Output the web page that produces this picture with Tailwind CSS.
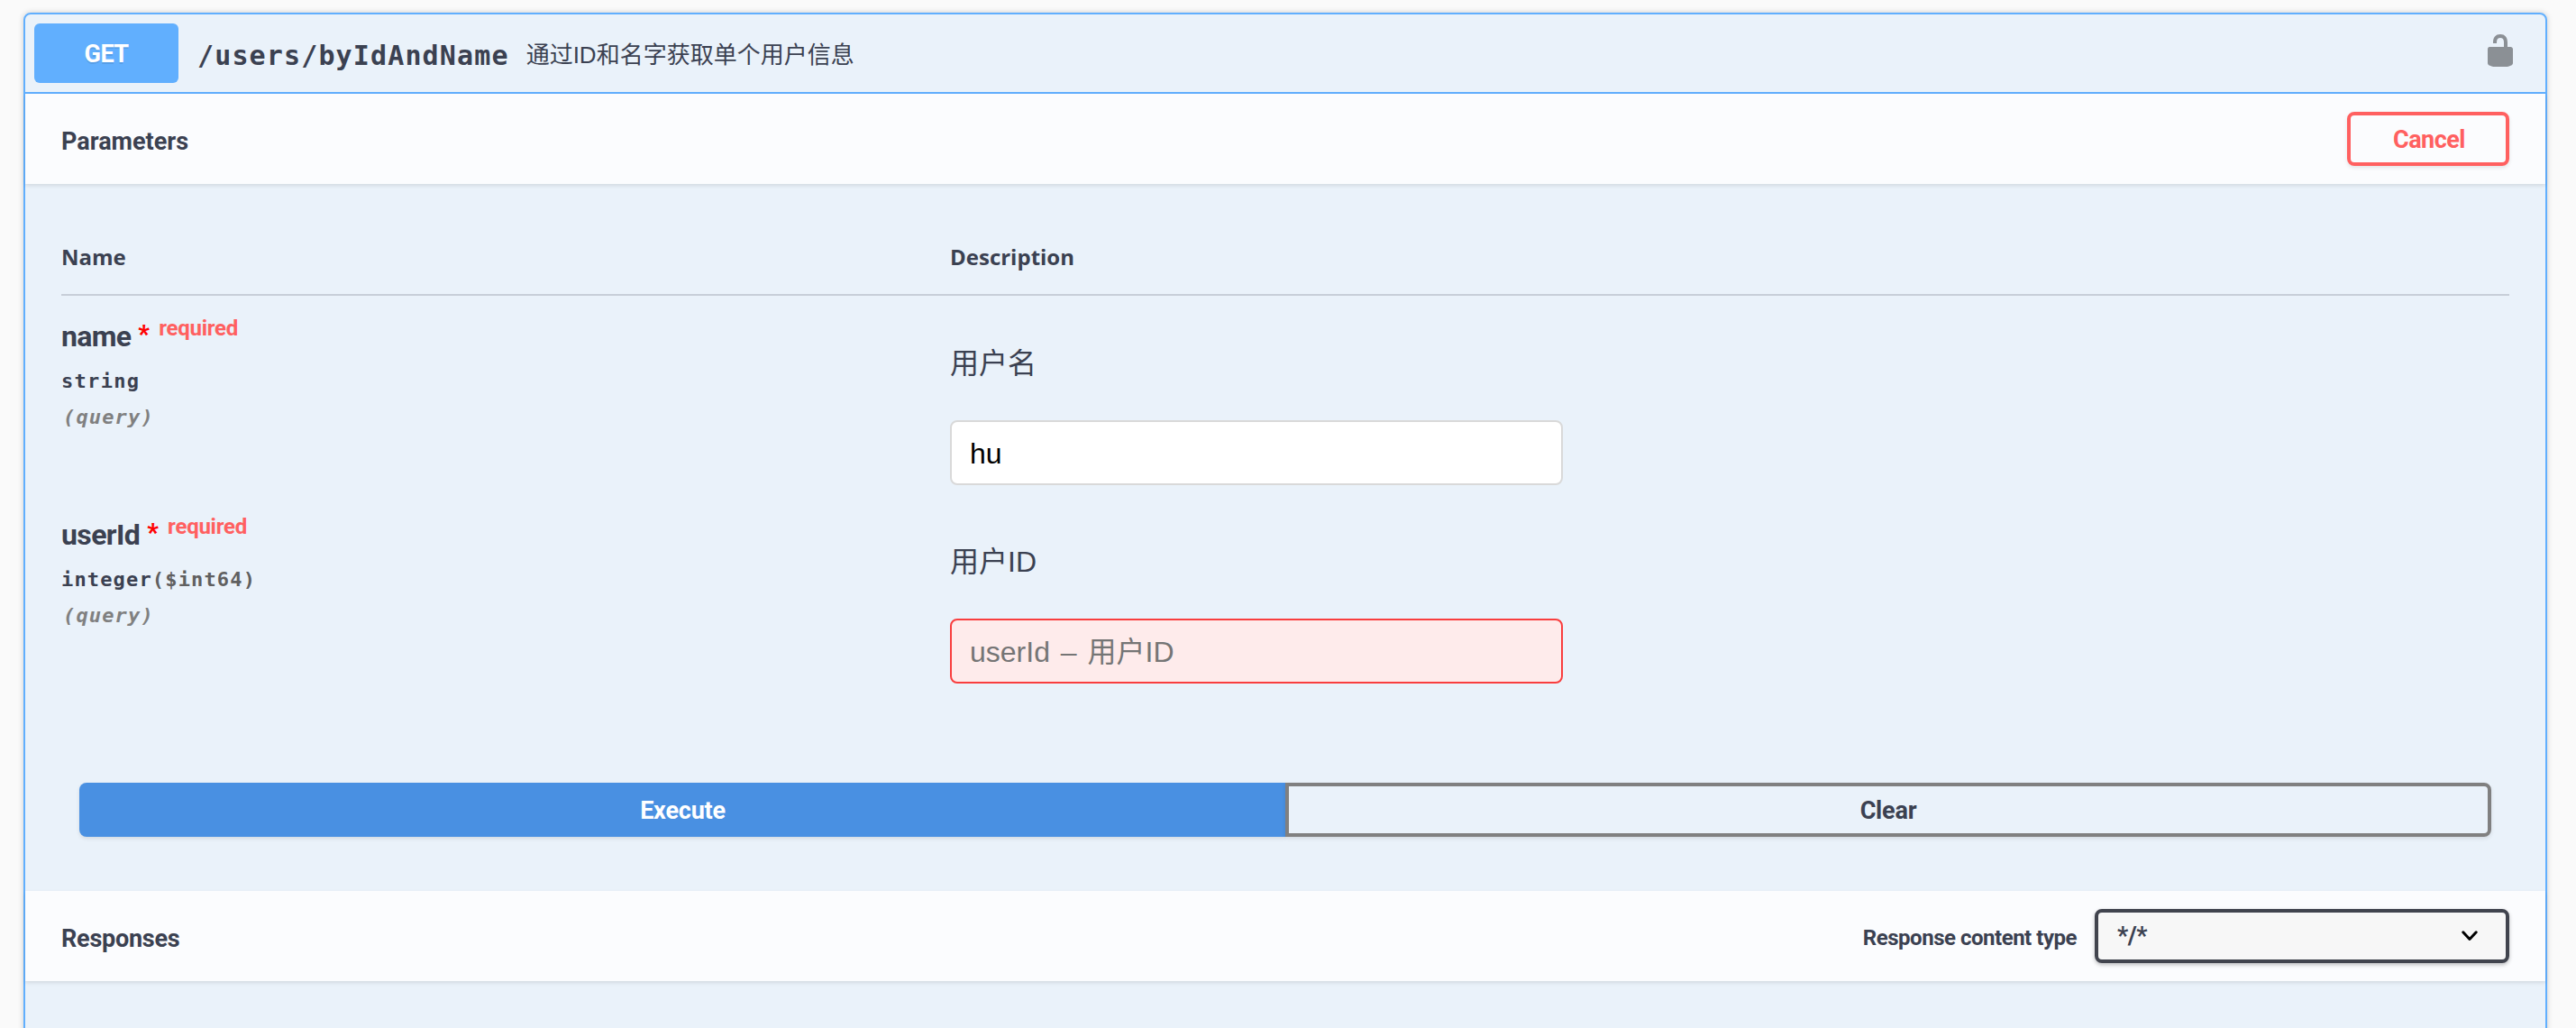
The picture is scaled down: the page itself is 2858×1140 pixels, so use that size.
<!DOCTYPE html>
<html lang="zh">
<head>
<meta charset="utf-8">
<title>API</title>
<script src="https://cdn.jsdelivr.net/npm/@tailwindcss/browser@4"></script>
</head>
<body class="bg-[#fafafa] text-[#3b4151] w-[2858px] h-[1140px] overflow-hidden font-['Roboto',sans-serif]">
<main class="pt-[14px] pl-[26px] h-[1140px] overflow-hidden">
<section class="w-[2800px] h-[1200px] border-2 border-[#61affe] rounded-lg bg-[#61affe]/10 shadow-[0_0_6px_rgba(0,0,0,0.19)]">
  <header class="h-[88px] flex items-center border-b-2 border-[#61affe] pl-[10px] pr-[30px]">
    <div class="w-[160px] h-[66px] rounded-md bg-[#61affe] text-white font-bold text-[27px] leading-[69px] tracking-[-0.6px] text-center [text-shadow:0_2px_0_rgba(0,0,0,0.1)]">GET</div>
    <div class="ml-[21px] pt-[5px] font-['DejaVu_Sans_Mono',monospace] font-bold text-[30px] leading-[40px] tracking-[1.14px]">/users/byIdAndName</div>
    <div class="ml-[19px] flex-1 pt-[4px] font-['Liberation_Sans','Noto_Sans_CJK_SC',sans-serif] text-[26px] leading-[40px]">通过ID和名字获取单个用户信息</div>
    <svg class="w-10 h-10 mb-1.5 opacity-40" viewBox="0 0 20 20"><path d="M15.8 8H14V5.6C14 2.703 12.665 1 10 1 7.334 1 6 2.703 6 5.6V6h2v-.801C8 3.754 8.797 3 10 3c1.203 0 2 .754 2 2.199V8H4c-.553 0-1 .646-1 1.199V17c0 .549.428 1.139.951 1.307l1.197.387C5.672 18.861 6.55 19 7.1 19h5.8c.549 0 1.428-.139 1.951-.307l1.196-.387c.524-.167.953-.757.953-1.306V9.199C17 8.646 16.352 8 15.8 8z"/></svg>
  </header>
  <div class="h-[100px] flex items-center justify-between px-10 bg-white/80 shadow-[0_2px_4px_rgba(0,0,0,0.1)]">
    <h4 class="pt-[5px] font-bold text-[27px] leading-[32px]">Parameters</h4>
    <button class="w-[180px] h-[60px] border-4 border-[#ff6060] rounded-lg text-[#ff6060] font-bold text-[27px] tracking-[-0.5px] pt-[2px] pl-[2px] shadow-[0_2px_4px_rgba(0,0,0,0.1)]">Cancel</button>
  </div>
  <div class="h-[784px] px-10 pt-10">
    <div class="h-[84px] border-b-2 border-[#3b4151]/20 grid grid-cols-[986px_1fr] pt-[23px] font-['Open_Sans',sans-serif] font-bold text-[24px] leading-[36px]">
      <div>Name</div><div>Description</div>
    </div>
    <div class="grid grid-cols-[986px_1fr] grid-rows-[220px_220px]">
      <div class="pt-[20px]">
        <div class="flex h-[50px] font-bold text-[32px] leading-[50px] tracking-[-0.7px]"><span>name</span><span class="ml-[8px] text-[27px] font-black leading-[46px] text-[#ff0000]">*</span><span class="ml-[11px] text-[24px] leading-[32px] tracking-[-0.25px] text-[#ff6060]">required</span></div>
        <div class="font-['DejaVu_Sans_Mono',monospace] font-bold text-[22px] leading-[40px] tracking-[1.3px] pt-[5px]">string</div>
        <div class="font-['DejaVu_Sans_Mono',monospace] font-bold italic text-[22px] leading-[40px] tracking-[1.16px] pl-[2px] text-[#808080]">(query)</div>
      </div>
      <div class="pt-[53px] font-['Liberation_Sans','Noto_Sans_CJK_SC',sans-serif] text-[32px]">
        <div class="h-[85px] leading-[44px]">用户名</div>
        <div class="w-[680px] h-[72px] rounded-lg border-2 border-[#d9d9d9] bg-white px-5 leading-[70px] text-black">hu</div>
      </div>
      <div class="pt-[20px]">
        <div class="flex h-[50px] font-bold text-[32px] leading-[50px] tracking-[-0.6px]"><span>userId</span><span class="ml-[8px] text-[27px] font-black leading-[46px] text-[#ff0000]">*</span><span class="ml-[11px] text-[24px] leading-[32px] tracking-[-0.25px] text-[#ff6060]">required</span></div>
        <div class="font-['DejaVu_Sans_Mono',monospace] font-bold text-[22px] leading-[40px] tracking-[1.16px] pt-[5px]">integer<span class="text-[#606060]">($int64)</span></div>
        <div class="font-['DejaVu_Sans_Mono',monospace] font-bold italic text-[22px] leading-[40px] tracking-[1.16px] pl-[2px] text-[#808080]">(query)</div>
      </div>
      <div class="pt-[53px] font-['Liberation_Sans','Noto_Sans_CJK_SC',sans-serif] text-[32px]">
        <div class="h-[85px] leading-[44px]">用户ID</div>
        <div class="w-[680px] h-[72px] rounded-lg border-2 border-[#f93e3e] bg-[#feebeb] px-5 leading-[70px] text-[#757575] [word-spacing:3px]">userId – 用户ID</div>
      </div>
    </div>
    <div class="flex mt-[100px] px-5">
      <button class="w-[1338px] h-[60px] rounded-l-lg bg-[#4990e2] text-white font-bold text-[27px] tracking-[-0.2px] pt-[2px] pl-px shadow-[0_2px_4px_rgba(0,0,0,0.1)]">Execute</button>
      <button class="w-[1338px] h-[60px] rounded-r-lg border-4 border-[#808080] font-bold text-[27px] tracking-[-0.2px] pt-[2px] shadow-[0_2px_4px_rgba(0,0,0,0.1)]">Clear</button>
    </div>
  </div>
  <div class="h-[100px] flex items-center px-10 bg-white/80 shadow-[0_2px_4px_rgba(0,0,0,0.1)]">
    <h4 class="flex-1 pt-[6px] font-bold text-[27px] leading-[32px] tracking-[-0.25px]">Responses</h4>
    <div class="pt-[4px] font-bold text-[24px] leading-[32px] tracking-[-0.48px] mr-5">Response content type</div>
    <div class="w-[460px] h-[60px] flex items-center justify-between pl-[21px] pr-[31px] border-4 border-[#41444e] rounded-lg bg-[#f7f7f7] shadow-[0_2px_4px_rgba(0,0,0,0.25)] font-bold text-[27px] tracking-[-0.5px]"><span>*/*</span>
      <svg class="w-[18px] h-[12px]" viewBox="0 0 18 12" fill="none" stroke="#000" stroke-width="3" stroke-linecap="round" stroke-linejoin="round"><path d="M1.8 1.8 9 9.5 16.2 1.8"/></svg>
    </div>
  </div>
</section>
</main>
</body>
</html>
